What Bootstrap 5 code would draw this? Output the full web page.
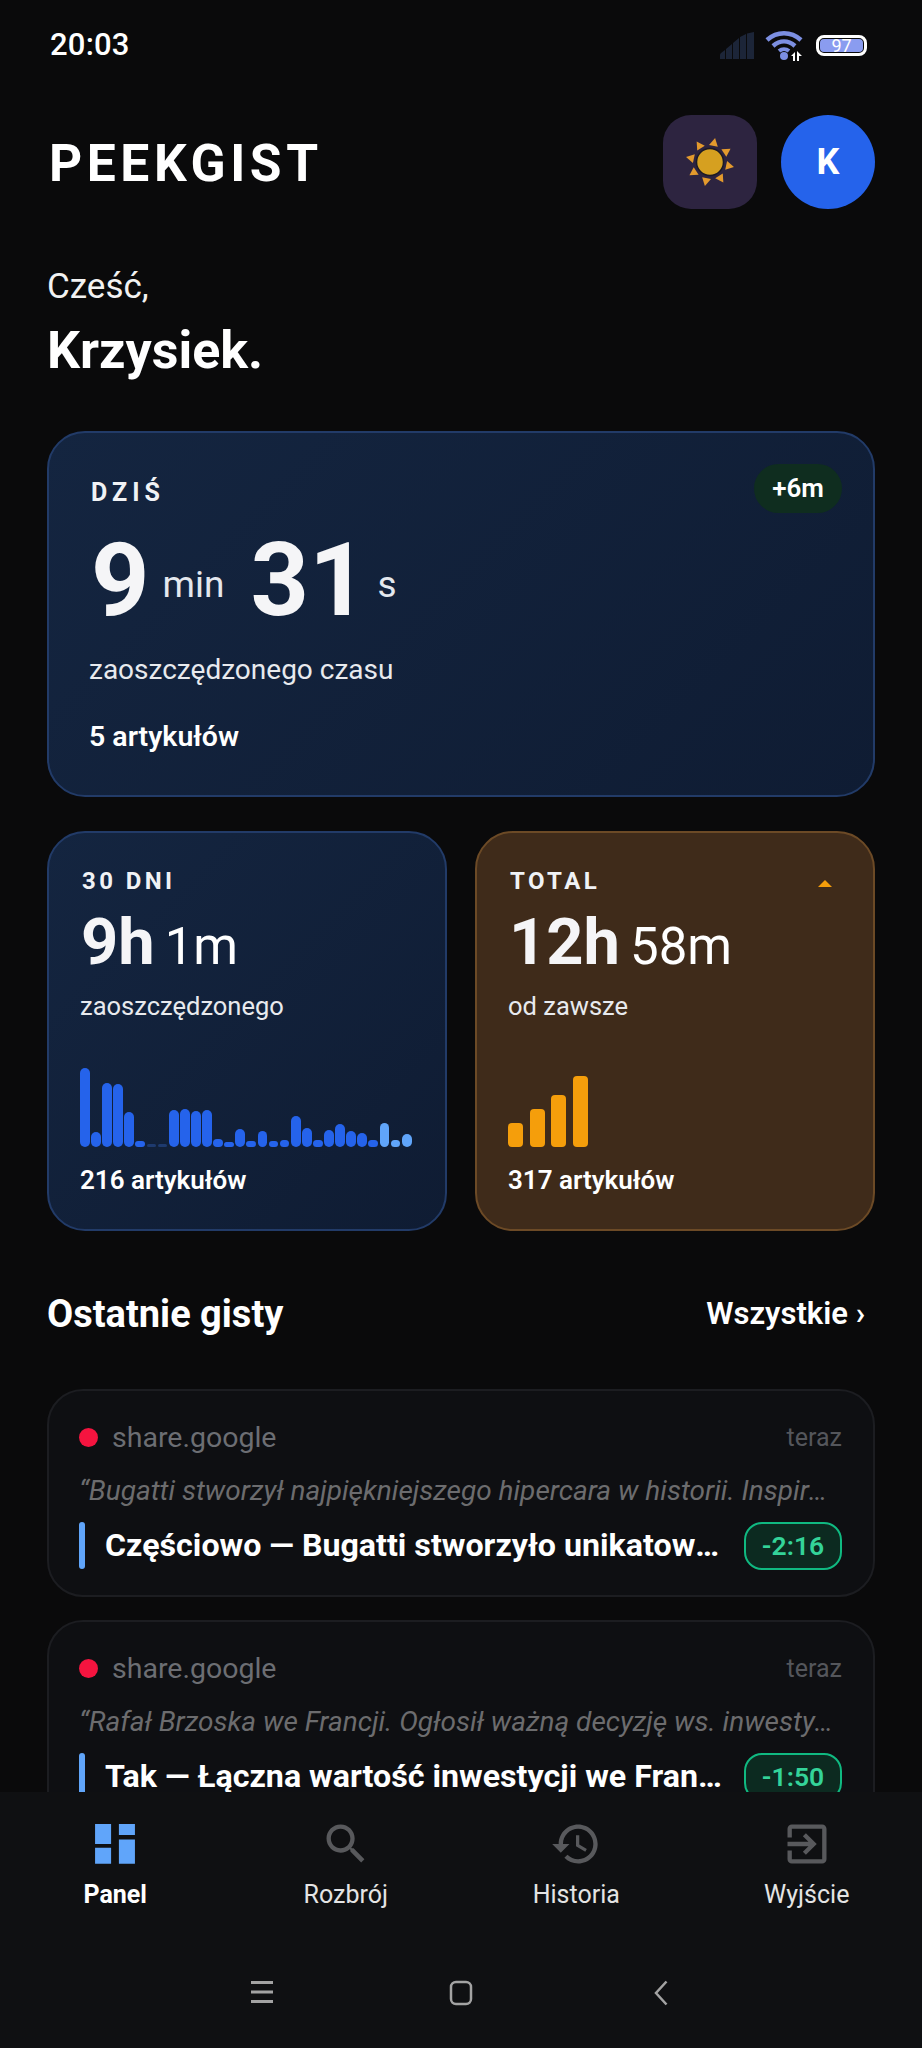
<!DOCTYPE html>
<html lang="pl">
<head>
  <meta charset="UTF-8" />
  <meta name="viewport" content="width=device-width, initial-scale=1" />
  <title>PeekGist</title>
  <link href="https://cdn.jsdelivr.net/npm/bootstrap@5.3.0/dist/css/bootstrap.min.css" rel="stylesheet" />
  <style>
    html, body { height: 2048px; overflow: hidden; }
    body { background: #0a0a0b; color: #fff; font-family: Roboto, "Liberation Sans", sans-serif; }
    .app-shell { height: 2048px; }
    .app-main { flex: 1 1 auto; min-height: 0; overflow: hidden; padding: 0 47px; }

    .status-row { height: 91px; margin: 0 -47px; padding: 0 55px 0 50px; }
    .status-time { font-size: 31px; font-weight: 500; letter-spacing: .2px; }
    .status-batt { width: 51px; height: 21px; border: 3px solid #fff; border-radius: 8px; padding: 1px; margin-left: 11px; }
    .status-batt span { display: block; height: 100%; background: #8a9cf0; border-radius: 4px; font-size: 18px; line-height: 13px; text-align: center; color: #fff; }

    .top-head { margin-top: 24px; padding-left: 2px; }
    .brand-name { font-size: 51.5px; font-weight: 700; letter-spacing: 4.6px; line-height: 91px; padding-top: 3px; }
    .theme-btn { width: 94px; height: 94px; border-radius: 28px; background: #2d2440; }
    .avatar-btn { width: 94px; height: 94px; border-radius: 50%; background: #2563eb; font-size: 36px; font-weight: 700; margin-left: 24px; }

    .hello-small { font-size: 35px; line-height: 44px; margin-top: 56px; color: #f2f2f2; }
    .hello-name { font-size: 52px; font-weight: 700; line-height: 62px; margin-top: 11px; }

    .stat-box { border-radius: 38px; border: 2.5px solid #223b68; background: linear-gradient(135deg, #142540, #0f1c33); }
    .stat-today { height: 366px; margin-top: 49px; padding: 45px 42px 0 42px; }
    .stat-label { font-size: 24px; font-weight: 700; letter-spacing: 3.400px; line-height: 30px; color: #f0f2f5; }
    .stat-today .stat-label { font-size: 25px; letter-spacing: 5px; }
    .delta-pill { position: absolute; top: 31px; right: 31px; width: 88px; height: 49px; border-radius: 25px; background: #0f2d1f; font-size: 26px; font-weight: 600; }
    .big-num { font-size: 102px; font-weight: 700; line-height: 100px; color: #f5f5f7; }
    .big-unit { font-size: 37px; font-weight: 400; margin: 10px 26px 0 13px; color: #e4e8ee; }
    .big-unit.unit-sec { margin-left: 10px; }
    .today-nums { margin-top: 22px; }
    .today-sub { font-size: 28px; line-height: 36px; margin-top: 22px; margin-left: -2px; color: #e8eaee; }
    .today-count { font-size: 28.500px; font-weight: 600; line-height: 36px; margin-top: 31px; margin-left: -2px; }

    .stat-pair { --bs-gutter-x: 28px; margin-top: 34px; }
    .stat-half { height: 400px; padding: 33px 31px 0; position: relative; }
    .stat-half .stat-label { padding-left: 2px; }
    .stat-total { background: #3f2b1a; border-color: #6c4a26; }
    .half-nums { margin-top: 19px; line-height: 54px; padding-left: 1px; }
    .half-strong { font-size: 65px; font-weight: 700; color: #f5f5f7; }
    .half-light { font-size: 51px; font-weight: 400; margin-left: 10px; }
    .half-sub { font-size: 25.500px; line-height: 34px; margin-top: 3px; color: #e8eaee; }
    .bars { height: 80px; margin-top: 43.500px; gap: 1.300px; }
    .bars i { display: block; width: 9.800px; min-height: 3px; border-radius: 5px; background: #2563eb; }
    .bars i.dim { background: #1e3a6e; }
    .bars i.lite { background: #60a5fa; }
    .bars-total { gap: 6.500px; }
    .bars-total i { width: 15px; border-radius: 4px; background: #f59e0b; }
    .half-count { font-size: 26px; font-weight: 600; line-height: 34px; margin-top: 16px; }
    .total-caret { position: absolute; top: 47px; right: 41px; width: 0; height: 0; border-left: 7px solid transparent; border-right: 7px solid transparent; border-bottom: 7px solid #f59e0b; }

    .section-head { margin-top: 60px; height: 46px; }
    .section-title { font-size: 38px; font-weight: 700; }
    .section-link { font-size: 31px; font-weight: 600; color: #fff; text-decoration: none; padding-right: 10px; }

    .gist-box { height: 208px; margin-top: 23px; padding: 28px 31px 0 30px; background: #0e0f12; border: 2px solid #1c1d21; border-radius: 36px; }
    .section-head + .gist-box { margin-top: 52px; }
    .gist-dot { width: 19px; height: 19px; border-radius: 50%; background: #f5143f; margin-right: 14px; }
    .gist-src { font-size: 28.500px; line-height: 34px; color: #6c6e73; }
    .gist-when { font-size: 25px; color: #54565b; }
    .gist-quote { font-size: 28px; font-style: italic; line-height: 34px; color: #6c6c6e; margin-top: 17px; }
    .gist-row { margin-top: 14px; height: 48px; }
    .gist-line { flex: 0 0 6px; height: 47px; border-radius: 4px; background: #60a5fa; margin-right: 20px; }
    .gist-title { font-size: 32.200px; font-weight: 700; min-width: 0; flex: 1 1 auto; }
    .gist-pill { flex: 0 0 98px; height: 48px; margin-left: 14px; border: 2px solid #10b981; border-radius: 18px; background: #0c2a20; color: #34d399; font-size: 26.500px; font-weight: 600; }

    .bottom-nav { flex: 0 0 256px; background: #0f1012; }
    .nav-items { height: 143px; padding-top: 26px; }
    .nav-cell { width: 25%; color: #e4e4e4; font-size: 25px; line-height: 30px; text-decoration: none; }
    .nav-cell svg { width: 52px; height: 52px; fill: #58595c; margin-bottom: 10px; }
    .nav-cell.is-on { color: #fff; font-weight: 700; }
    .nav-cell.is-on svg { fill: #60a5fa; }
    .sys-keys { padding-top: 45px; }
    .sys-keys span { width: 199.500px; }
    .sys-keys svg { display: block; margin: 0 auto; fill: none; stroke: #a3a3a3; stroke-width: 3; }
  </style>
</head>
<body>
  <div class="app-shell d-flex flex-column">
    <div class="app-main">

      <!-- status bar -->
      <div class="status-row d-flex justify-content-between align-items-center">
        <span class="status-time">20:03</span>
        <div class="d-flex align-items-center">
          <svg width="38" height="28" viewBox="0 0 38 28" class="me-2">
            <path d="M1 27v-4q0-1 1-2l4-3v9zM7 27V17l6-5v15zM14 27V11l6-5v21zM21 27V5l6-3v25zM28 27V1.500l7-1.500v27z" fill="#1c2538"/>
          </svg>
          <svg width="40" height="30" viewBox="0 0 40 30">
            <path d="M2 9C12 0 26 0 36 9" fill="none" stroke="#7c8fe2" stroke-width="4.500"/>
            <path d="M8 15c7-6 15-6 22 0" fill="none" stroke="#7c8fe2" stroke-width="4.500"/>
            <path d="M14 20c3-2.500 7-2.500 10 0" fill="none" stroke="#7c8fe2" stroke-width="4"/>
            <circle cx="19" cy="25" r="4" fill="#7c8fe2"/>
            <path d="M26 25l4-4v9h-2v-5zM32 20l5 5h-3v5h-2z" fill="#fff"/>
          </svg>
          <div class="status-batt"><span>97</span></div>
        </div>
      </div>

      <!-- header -->
      <div class="top-head d-flex justify-content-between align-items-center">
        <div class="brand-name">PEEKGIST</div>
        <div class="d-flex">
          <div class="theme-btn d-flex align-items-center justify-content-center">
            <svg width="52" height="52" viewBox="-26 -26 52 52">
              <g fill="#e39a2d">
                <path d="M-4.500 -16.500L0 -24.500L4.500 -16.500z" transform="rotate(12)"/>
                <path d="M-4.500 -16.500L0 -24.500L4.500 -16.500z" transform="rotate(57)"/>
                <path d="M-4.500 -16.500L0 -24.500L4.500 -16.500z" transform="rotate(102)"/>
                <path d="M-4.500 -16.500L0 -24.500L4.500 -16.500z" transform="rotate(147)"/>
                <path d="M-4.500 -16.500L0 -24.500L4.500 -16.500z" transform="rotate(192)"/>
                <path d="M-4.500 -16.500L0 -24.500L4.500 -16.500z" transform="rotate(237)"/>
                <path d="M-4.500 -16.500L0 -24.500L4.500 -16.500z" transform="rotate(282)"/>
                <path d="M-4.500 -16.500L0 -24.500L4.500 -16.500z" transform="rotate(327)"/>
              </g>
              <circle r="13.500" fill="#d6a020" stroke="#1d1a24" stroke-width="1.500"/>
            </svg>
          </div>
          <div class="avatar-btn d-flex align-items-center justify-content-center">K</div>
        </div>
      </div>

      <div class="hello-small">Cześć,</div>
      <div class="hello-name">Krzysiek.</div>

      <!-- today -->
      <div class="stat-box stat-today position-relative">
        <div class="stat-label">DZIŚ</div>
        <div class="delta-pill d-flex align-items-center justify-content-center">+6m</div>
        <div class="today-nums d-flex align-items-center">
          <span class="big-num">9</span><span class="big-unit">min</span>
          <span class="big-num">31</span><span class="big-unit unit-sec">s</span>
        </div>
        <div class="today-sub">zaoszczędzonego czasu</div>
        <div class="today-count">5 artykułów</div>
      </div>

      <!-- 30 days / total -->
      <div class="row stat-pair">
        <div class="col-6">
          <div class="stat-box stat-half">
            <div class="stat-label">30 DNI</div>
            <div class="half-nums"><span class="half-strong">9h</span><span class="half-light">1m</span></div>
            <div class="half-sub">zaoszczędzonego</div>
            <div class="bars d-flex align-items-end" id="monthBars"></div>
            <div class="half-count">216 artykułów</div>
          </div>
        </div>
        <div class="col-6">
          <div class="stat-box stat-half stat-total">
            <div class="stat-label">TOTAL</div>
            <div class="total-caret"></div>
            <div class="half-nums"><span class="half-strong">12h</span><span class="half-light">58m</span></div>
            <div class="half-sub">od zawsze</div>
            <div class="bars bars-total d-flex align-items-end">
              <i style="height:24px"></i><i style="height:38px"></i><i style="height:52px"></i><i style="height:71px"></i>
            </div>
            <div class="half-count">317 artykułów</div>
          </div>
        </div>
      </div>

      <!-- recent -->
      <div class="section-head d-flex justify-content-between align-items-center">
        <span class="section-title">Ostatnie gisty</span>
        <a class="section-link" href="#">Wszystkie ›</a>
      </div>

      <div class="gist-box">
        <div class="d-flex align-items-center">
          <span class="gist-dot"></span><span class="gist-src flex-grow-1">share.google</span><span class="gist-when">teraz</span>
        </div>
        <div class="gist-quote text-truncate">“Bugatti stworzył najpiękniejszego hipercara w historii. Inspirowany klasyką</div>
        <div class="gist-row d-flex align-items-center">
          <span class="gist-line"></span>
          <span class="gist-title text-truncate">Częściowo — Bugatti stworzyło unikatowy model</span>
          <span class="gist-pill d-flex align-items-center justify-content-center">-2:16</span>
        </div>
      </div>

      <div class="gist-box">
        <div class="d-flex align-items-center">
          <span class="gist-dot"></span><span class="gist-src flex-grow-1">share.google</span><span class="gist-when">teraz</span>
        </div>
        <div class="gist-quote text-truncate">“Rafał Brzoska we Francji. Ogłosił ważną decyzję ws. inwestycji we Francji</div>
        <div class="gist-row d-flex align-items-center">
          <span class="gist-line"></span>
          <span class="gist-title text-truncate">Tak — Łączna wartość inwestycji we Francji wynosi</span>
          <span class="gist-pill d-flex align-items-center justify-content-center">-1:50</span>
        </div>
      </div>
    </div>

    <!-- bottom nav -->
    <div class="bottom-nav">
      <div class="nav-items d-flex">
        <a class="nav-cell is-on d-flex flex-column align-items-center" href="#">
          <svg viewBox="0 0 24 24"><path d="M2.800 2.800h7.400V12H2.800zM2.800 13.700h7.400v7.400H2.800zM13.800 2.800h7.400v5h-7.400zM13.800 9.900h7.400v11.200h-7.400z"/></svg>
          Panel
        </a>
        <a class="nav-cell d-flex flex-column align-items-center" href="#">
          <svg viewBox="0 0 24 24"><path d="M15.500 14h-.79l-.28-.27C15.410 12.590 16 11.110 16 9.500 16 5.910 13.090 3 9.500 3S3 5.910 3 9.500 5.910 16 9.500 16c1.610 0 3.090-.59 4.230-1.570l.27.28v.79l5 4.990L20.490 19l-4.990-5zm-6 0C7.010 14 5 11.990 5 9.500S7.010 5 9.500 5 14 7.010 14 9.500 11.990 14 9.500 14z"/></svg>
          Rozbrój
        </a>
        <a class="nav-cell d-flex flex-column align-items-center" href="#">
          <svg viewBox="0 0 24 24"><path d="M13 3c-4.970 0-9 4.030-9 9H1l3.890 3.890.07.14L9 12H6c0-3.870 3.130-7 7-7s7 3.130 7 7-3.130 7-7 7c-1.930 0-3.680-.79-4.940-2.060l-1.420 1.420C8.270 19.990 10.510 21 13 21c4.970 0 9-4.030 9-9s-4.030-9-9-9zm-1 5v5l4.280 2.540.72-1.210-3.500-2.080V8H12z"/></svg>
          Historia
        </a>
        <a class="nav-cell d-flex flex-column align-items-center" href="#">
          <svg viewBox="0 0 24 24"><path d="M10.090 15.590L11.500 17l5-5-5-5-1.410 1.410L12.670 11H3v2h9.670l-2.580 2.590zM19 3H5c-1.110 0-2 .9-2 2v4h2V5h14v14H5v-4H3v4c0 1.100.89 2 2 2h14c1.100 0 2-.9 2-2V5c0-1.100-.9-2-2-2z"/></svg>
          Wyjście
        </a>
      </div>
      <div class="sys-keys d-flex justify-content-center">
        <span><svg width="24" height="24" viewBox="0 0 24 24"><path d="M1 2.500h22M1 12h22M1 21.500h22"/></svg></span>
        <span><svg width="24" height="26" viewBox="0 0 24 26"><rect x="2" y="2" width="20" height="22" rx="5" stroke-width="2.500"/></svg></span>
        <span><svg width="14" height="26" viewBox="0 0 14 26"><path d="M12.500 1.500L2 13l10.500 11.500" stroke-width="2.500"/></svg></span>
      </div>
    </div>
  </div>

  <script>
    const monthValues = [79, 15, 64, 63, 35, 6, 3, 3, 37, 38, 36, 37, 8, 5, 18, 6, 16, 6, 7, 31, 19, 7, 17, 23, 16, 14, 7, 24, 7, 13];
    const monthBars = document.getElementById("monthBars");
    monthValues.forEach((h, i) => {
      const bar = document.createElement("i");
      bar.style.height = h + "px";
      if (h === 3) bar.className = "dim";
      if (i >= 27) bar.className = "lite";
      monthBars.appendChild(bar);
    });
  </script>
  <script src="https://cdn.jsdelivr.net/npm/bootstrap@5.3.0/dist/js/bootstrap.bundle.min.js"></script>
</body>
</html>
